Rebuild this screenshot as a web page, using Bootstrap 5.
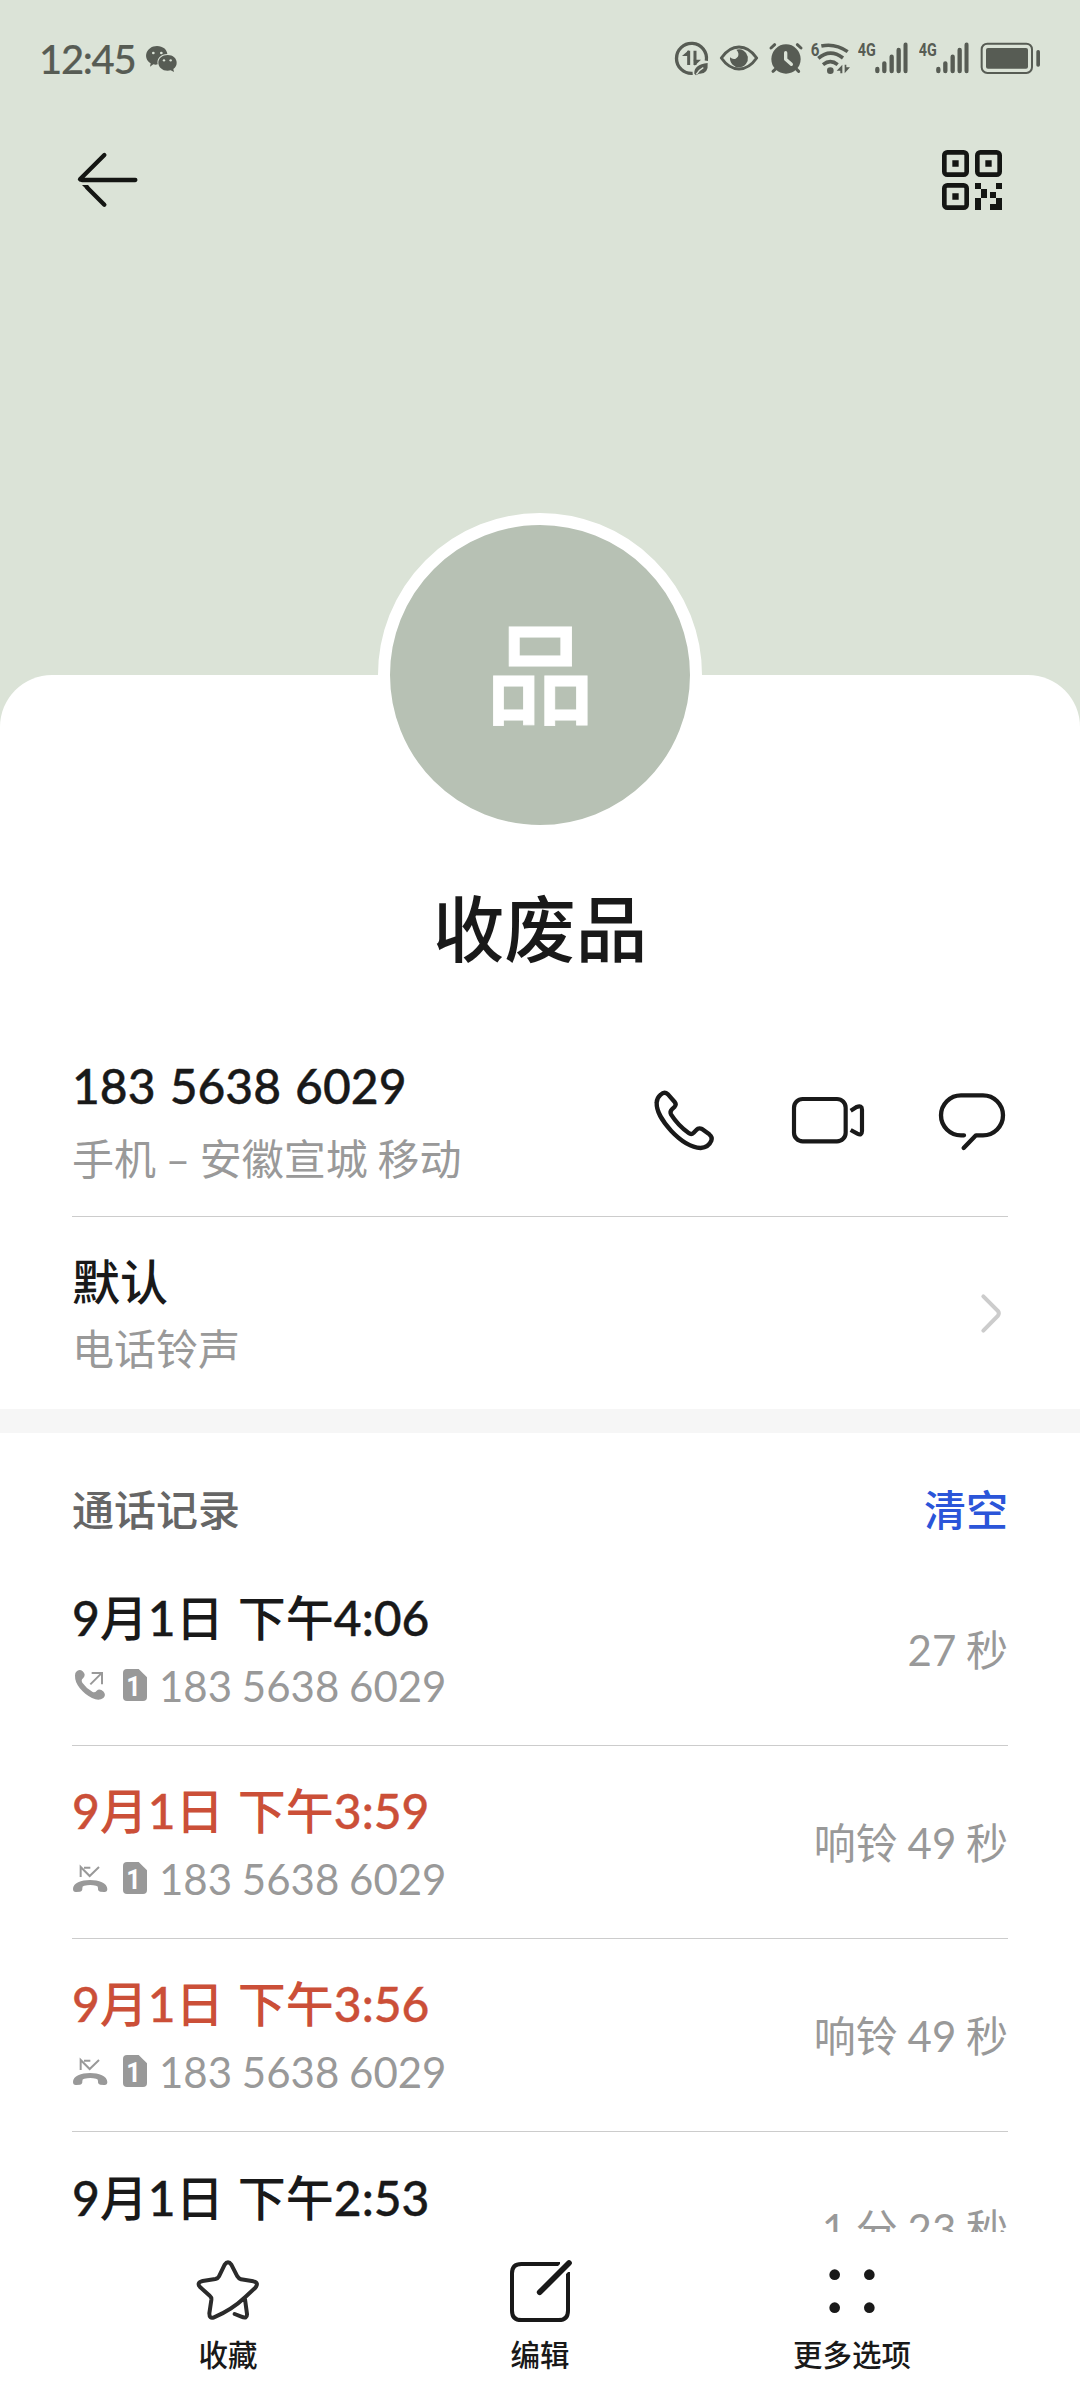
<!DOCTYPE html>
<html lang="zh-CN">
<head>
<meta charset="utf-8">
<meta name="viewport" content="width=device-width, initial-scale=1">
<title>收废品</title>
<link href="https://cdn.jsdelivr.net/npm/bootstrap@5.3.0/dist/css/bootstrap.min.css" rel="stylesheet">
<style>
  body { font-family: Lato, "Noto Sans CJK SC", sans-serif; color: #191919; background: #fff; width: 1080px; height: 2400px; overflow: hidden; }
  svg { display: block; flex: none; overflow: visible; }
  .scroll-area { height: 2232px; }
  .cover { background: #dbe3d7; height: 735px; }
  .status { height: 117px; padding: 0 39px 0 39px; color: #575c54; }
  .clock { font-size: 40px; line-height: 60px; font-weight: 500; letter-spacing: -1.3px; margin-right: 11px; -webkit-text-stroke: .2px; }
  .topbar { height: 126px; padding: 0 72px; color: #141613; }
  .sheet { display: flow-root; margin-top: -60px; border-radius: 52px 52px 0 0; background: #fff; }
  .avatar { width: 324px; height: 324px; margin-top: -162px; padding-bottom: 5px; border: 12px solid #fff; background: #b7c1b4; color: #fff; font-size: 110px; font-weight: 500; line-height: 1; -webkit-text-stroke: .8px; }
  .name-line { height: 90px; margin-top: 46px; font-size: 71.5px; line-height: 90px; font-weight: 500; }
  .side { padding-left: 72px; padding-right: 72px; }
  .line-b { border-bottom: 1px solid #ccc; }
  .contact { padding: 83px 0 32px; }
  .ringtone { padding: 35px 0; }
  .t-main { font-size: 48px; line-height: 60px; font-weight: 500; word-spacing: 2px; white-space: nowrap; }
  .fig { -webkit-text-stroke: .4px; }
  .t-sub { font-size: 42px; line-height: 50px; color: #999; word-spacing: -1px; white-space: nowrap; font-weight: 400; }
  .gap-a { margin-top: 18px; }
  .gap-b { margin-top: 12px; }
  .gap-c { margin-top: 13px; height: 50px; }
  .gap-c svg { margin-bottom: 2px; }
  .gap-c svg + svg { margin-left: 15px; }
  .band { height: 24px; background: #f6f6f6; }
  .log-head { height: 60px; margin-top: 47px; margin-bottom: 13px; font-size: 42px; line-height: 60px; font-weight: 500; color: #666; }
  .log-head a { color: #2b55d9; }
  .entry { height: 193px; padding: 35px 0 34px; }
  .missed { color: #cb4f38; }
  .entry .num { margin-left: 12px; }
  .acts { gap: 70px; }
  .tabs { height: 168px; padding: 29px 72px 0; font-size: 29.5px; line-height: 40px; font-weight: 500; }
  .tabs svg { margin-bottom: 14px; }
</style>
</head>
<body>
<svg width="0" height="0" class="position-absolute">
  <defs>
    <symbol id="sim" viewBox="249 828 72 108">
      <path fill="#999" d="M261 834H296L321 859V918Q321 930 309 930H261Q249 930 249 918V846Q249 834 261 834Z"/>
      <text x="281" y="914" font-family="Roboto" font-weight="700" font-size="84" fill="#fff" text-anchor="middle" textLength="44" lengthAdjust="spacingAndGlyphs">1</text>
    </symbol>
    <symbol id="call-out" viewBox="96 828 108 108">
      <path fill="#999" d="M108 843Q118 832 128 841Q139 851 130 861Q122 866 127 875Q140 893 158 903Q165 906 170 899Q179 891 191 902Q199 912 190 921Q177 931 156 921C128 906 104 880 105 854Q105 847 108 843Z"/>
      <path fill="none" stroke="#999" stroke-width="6" d="M151 880L184 847M155 846H186V880"/>
    </symbol>
    <symbol id="call-missed" viewBox="96 327 108 108">
      <path fill="#999" d="M99 414C98 378 202 378 202 414Q202 424 192 423L181 422Q173 421 174 412Q175 405 168 404Q151 400 133 404Q126 405 127 412Q128 421 120 422L109 423Q99 424 99 414Z"/>
      <path fill="none" stroke="#999" stroke-width="6" d="M122 378V348L149 375L177 348M132 350H151"/>
    </symbol>
    <symbol id="bars" viewBox="0 60 150 110">
      <text x="0" y="108" font-family="Roboto" font-weight="700" font-size="56" fill="#575c54" textLength="54" lengthAdjust="spacingAndGlyphs">4G</text>
      <g stroke="#575c54" stroke-width="13" stroke-linecap="round"><path d="M59 147V153M80 130V153M102 110V153M123 90V153M144 74V153"/></g>
    </symbol>
  </defs>
</svg>

<main class="scroll-area overflow-hidden">
  <header class="cover">
    <div class="status d-flex align-items-center justify-content-between">
      <div class="d-flex align-items-center">
        <span class="clock">12:45</span>
        <svg width="32" height="28" viewBox="439 72 96 84">
          <path fill="#575c54" d="M472 75C490 75 502 86 503 99C484 99 470 112 474 130Q468 132 461 130L451 137L453 127C427 110 441 75 472 75Z"/>
          <path fill="#575c54" d="M504 102C520 102 531 112 531 125Q531 137 521 144L523 153L513 148C492 153 476 140 476 125C476 112 488 102 504 102Z"/>
          <g fill="#dbe3d7"><circle cx="461" cy="96" r="4"/><circle cx="485" cy="96" r="4"/><circle cx="493" cy="118" r="3.5"/><circle cx="513" cy="118" r="3.5"/></g>
        </svg>
      </div>
      <div class="d-flex align-items-center">
        <svg width="41.67" height="36.67" viewBox="40 60 125 110">
          <path fill="none" stroke="#575c54" stroke-width="10" d="M99 160A45 45 0 1 1 140 122"/>
          <path fill="none" stroke="#575c54" stroke-width="9" d="M87 92V135M106 92V135"/>
          <path fill="#575c54" d="M87 91L67 108H91ZM105 137L124 119H102Z"/>
          <path fill="#575c54" d="M144 129Q147 163 118 161L109 166L104 161Q102 134 144 129Z"/>
          <path fill="none" stroke="#dbe3d7" stroke-width="4" d="M110 163Q118 150 131 143"/>
        </svg>
        <svg width="49" height="36.67" viewBox="165 60 147 110">
          <path fill="none" stroke="#575c54" stroke-width="9" stroke-linejoin="round" d="M184 114Q207 81 237 81Q267 81 290 114Q267 147 237 147Q207 147 184 114Z"/>
          <path fill="#575c54" d="M229 89A27 27 0 1 1 210 112Q218 119 227 116Q237 111 235 100Q234 94 229 89Z"/>
        </svg>
        <svg width="43" height="36.67" viewBox="312 60 129 110">
          <circle cx="378" cy="117" r="44" fill="#575c54"/>
          <g fill="none" stroke="#575c54" stroke-width="9" stroke-linecap="round"><path d="M333 84L344 74M423 84L412 74M348 146L339 154M408 146L416 154"/></g>
          <path fill="none" stroke="#dbe3d7" stroke-width="10" stroke-linecap="round" stroke-linejoin="round" d="M377 98V118L394 133"/>
        </svg>
        <svg width="47" height="36.67" viewBox="441 60 141 110">
          <text x="452" y="107" font-family="Roboto" font-weight="700" font-size="56" fill="#575c54" textLength="26" lengthAdjust="spacingAndGlyphs">6</text>
          <g fill="none" stroke="#575c54" stroke-width="10.5"><path d="M484 78Q526 69 563 95M475 115Q510 84 549 114M489 134Q511 116 533 134"/></g>
          <circle cx="511" cy="152" r="10" fill="#575c54"/>
          <path fill="#575c54" d="M547 134V160H541V152H530ZM554 160V134H559V142H570Z"/>
        </svg>
        <svg width="61" height="36.67" viewBox="582 60 183 110"><use href="#bars" x="593" y="60" width="150" height="110"/></svg>
        <svg width="60" height="36.67" viewBox="765 60 180 110"><use href="#bars" x="776" y="60" width="150" height="110"/></svg>
        <svg width="66" height="36.67" viewBox="945 60 198 110">
          <rect x="965" y="71" width="151" height="88" rx="17" fill="none" stroke="#575c54" stroke-width="6"/>
          <rect x="978" y="84" width="126" height="62" rx="6" fill="#575c54"/>
          <rect x="1129" y="90" width="11" height="50" rx="5" fill="#575c54"/>
        </svg>
      </div>
    </div>
    <nav class="topbar d-flex align-items-center justify-content-between">
      <svg width="72" height="60" viewBox="216 390 216 180">
        <g fill="none" stroke="currentColor" stroke-width="13" stroke-linecap="round" stroke-linejoin="round"><path d="M313 405L240 478L246 480H406"/><path d="M262 503L313 554"/></g>
        <path fill="currentColor" d="M246 495H264L268 501L258 507Z"/>
      </svg>
      <svg width="66" height="60" viewBox="846 390 198 180">
        <g fill="none" stroke="currentColor" stroke-width="14"><rect x="853" y="397" width="67" height="67" rx="9"/><rect x="952" y="397" width="67" height="67" rx="9"/><rect x="853" y="496" width="67" height="67" rx="9"/></g>
        <path fill="currentColor" d="M877 421h19v19h-19zM976 421h19v19h-19zM877 520h19v19h-19zM945 489h18v18h18v27h-18v36h-18v-36h18v-27h-18zM1008 489h18v18h-18zM990 516h18v18h18v36h-36v-18h18v-18h-18z"/>
      </svg>
    </nav>
  </header>

  <section class="sheet position-relative">
    <div class="avatar rounded-circle mx-auto d-flex align-items-center justify-content-center">品</div>
    <h1 class="name-line mb-0 text-center">收废品</h1>
    <div class="side">
      <div class="contact line-b d-flex align-items-center justify-content-between">
        <div>
          <div class="t-main fig">183 5638 6029</div>
          <div class="t-sub gap-a">手机 – 安徽宣城 移动</div>
        </div>
        <div class="acts d-flex">
          <svg width="70" height="66.67" viewBox="90 110 210 200"><path fill="none" stroke="#191919" stroke-width="13" stroke-linejoin="round" d="M110 157C110 147 115 139 122 133Q133 122 144 132L164 155Q170 162 164 169L156 177Q149 184 153 192C165 211 185 233 206 248Q214 254 221 247L229 239Q236 231 246 236L268 252Q278 260 274 271Q266 291 242 293C185 290 108 205 110 157Z"/></svg>
          <svg width="76" height="66.67" viewBox="510 110 228 200"><g fill="none" stroke="#191919" stroke-width="12.5"><rect x="522" y="146" width="155" height="127" rx="26"/><path d="M692 181L710 170Q726 164 726 178V242Q726 257 712 250L692 239"/></g></svg>
          <svg width="72" height="66.67" viewBox="948 110 216 200"><path fill="none" stroke="#191919" stroke-width="13" stroke-linecap="round" stroke-linejoin="round" d="M1032 255H1023A60 60 0 0 1 1023 135H1089A60 60 0 0 1 1089 255H1068L1031 293"/></svg>
        </div>
      </div>
      <div class="ringtone d-flex align-items-center justify-content-between">
        <div>
          <div class="t-main">默认</div>
          <div class="t-sub gap-b">电话铃声</div>
        </div>
        <svg width="28" height="46.67" viewBox="1080 719 84 140"><path fill="none" stroke="#ccc" stroke-width="12" stroke-linecap="round" d="M1090 738L1134 782Q1139 789 1134 796L1090 841"/></svg>
      </div>
    </div>
  </section>

  <div class="band"></div>

  <section class="side">
    <div class="log-head d-flex justify-content-between"><span>通话记录</span><a class="text-decoration-none">清空</a></div>

    <div class="entry line-b d-flex align-items-center justify-content-between">
      <div>
        <div class="t-main"><span class="fig">9</span>月<span class="fig">1</span>日 下午<span class="fig">4:06</span></div>
        <div class="t-sub gap-c d-flex align-items-center"><svg width="36" height="36"><use href="#call-out"/></svg><svg width="24" height="36"><use href="#sim"/></svg><span class="num">183 5638 6029</span></div>
      </div>
      <span class="t-sub">27 秒</span>
    </div>

    <div class="entry line-b d-flex align-items-center justify-content-between">
      <div>
        <div class="t-main missed"><span class="fig">9</span>月<span class="fig">1</span>日 下午<span class="fig">3:59</span></div>
        <div class="t-sub gap-c d-flex align-items-center"><svg width="36" height="36"><use href="#call-missed"/></svg><svg width="24" height="36"><use href="#sim"/></svg><span class="num">183 5638 6029</span></div>
      </div>
      <span class="t-sub">响铃 49 秒</span>
    </div>

    <div class="entry line-b d-flex align-items-center justify-content-between">
      <div>
        <div class="t-main missed"><span class="fig">9</span>月<span class="fig">1</span>日 下午<span class="fig">3:56</span></div>
        <div class="t-sub gap-c d-flex align-items-center"><svg width="36" height="36"><use href="#call-missed"/></svg><svg width="24" height="36"><use href="#sim"/></svg><span class="num">183 5638 6029</span></div>
      </div>
      <span class="t-sub">响铃 49 秒</span>
    </div>

    <div class="entry d-flex align-items-center justify-content-between">
      <div>
        <div class="t-main"><span class="fig">9</span>月<span class="fig">1</span>日 下午<span class="fig">2:53</span></div>
        <div class="gap-c"></div>
      </div>
      <span class="t-sub">1 分 23 秒</span>
    </div>
  </section>
</main>

<footer class="tabs">
  <div class="row g-0 text-center">
    <div class="col">
      <svg class="mx-auto" width="64" height="60" viewBox="108 303 192 180"><path fill="none" stroke="#2b2b2b" stroke-width="12" stroke-linecap="round" stroke-linejoin="round" d="M224 462L244 470Q262 478 261 462L255 418M256 411L286 383Q298 368 280 364L243 358Q236 356 232 349L214 314Q204 299 194 314L177 349Q174 355 166 357L128 363Q108 368 121 382L150 408Q155 412 154 420L148 460Q148 478 162 472Q215 450 256 411"/></svg>
      收藏
    </div>
    <div class="col">
      <svg class="mx-auto" width="64" height="60" viewBox="1044 303 192 180"><path fill="none" stroke="#191919" stroke-width="12" d="M1200 312H1084Q1056 312 1056 340V452Q1056 480 1084 480H1196Q1224 480 1224 452V336"/><path stroke="#fff" stroke-width="34" d="M1180 356L1236 300"/><path stroke="#191919" stroke-width="17" stroke-linecap="round" d="M1139 397L1227 309"/></svg>
      编辑
    </div>
    <div class="col">
      <svg class="mx-auto" width="64" height="60" viewBox="660 303 192 180"><g fill="#191919"><circle cx="704" cy="344" r="16"/><circle cx="808" cy="344" r="16"/><circle cx="704" cy="443" r="16"/><circle cx="808" cy="443" r="16"/></g></svg>
      更多选项
    </div>
  </div>
</footer>
<script src="https://cdn.jsdelivr.net/npm/bootstrap@5.3.0/dist/js/bootstrap.bundle.min.js"></script>
</body>
</html>
